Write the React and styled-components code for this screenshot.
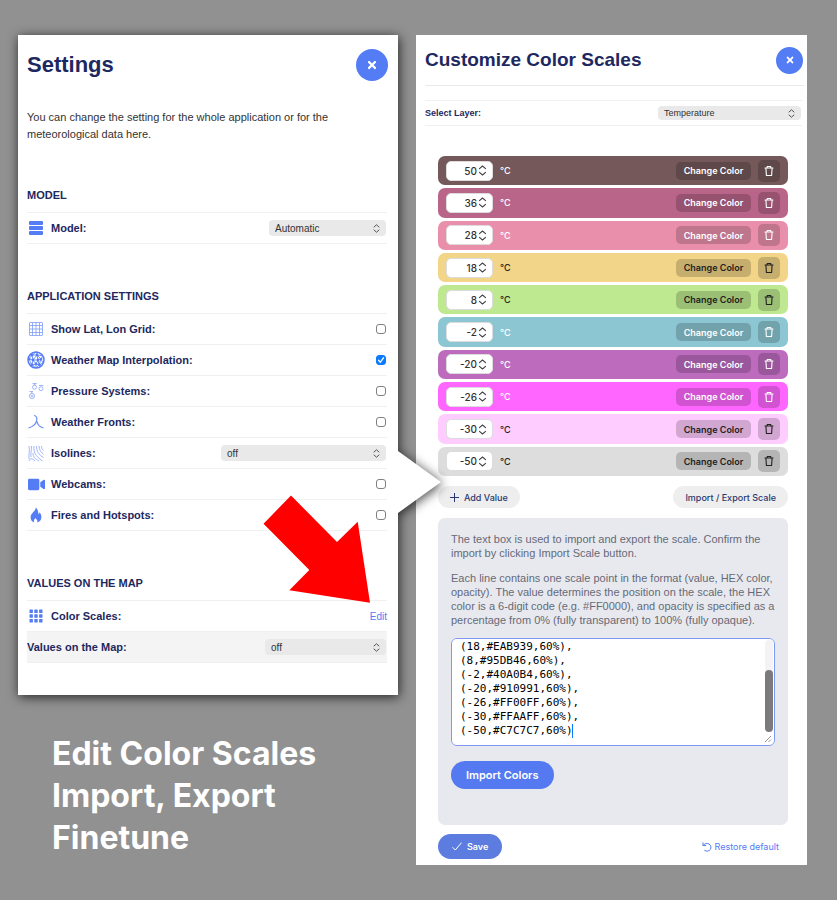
import React, { useEffect, useRef } from "react";
import styled, { createGlobalStyle } from "styled-components";
import { FaTimes, FaVideo } from "react-icons/fa";

const GlobalStyle = createGlobalStyle`
  * {
    box-sizing: border-box;
  }
  body {
    margin: 0;
    background: #919191;
    font-family: "Liberation Sans", Arial, sans-serif;
    color: #333;
  }
  h1, h2, p, ul {
    margin: 0;
    padding: 0;
  }
  button, input, select, textarea {
    font: inherit;
    color: inherit;
    margin: 0;
  }
  button {
    border: 0;
    padding: 0;
    cursor: pointer;
  }
`;

const Page = styled.main`
  display: grid;
  grid-template-columns: 380fr 391fr;
  gap: 18px;
  align-items: start;
  min-height: 100vh;
  padding: 35px 30px 35px 18px;
`;

const SettingsPanel = styled.section`
  position: relative;
  z-index: 1;
  padding: 0 10px 32px 9px;
  background: #fff;
  filter: drop-shadow(1px 2px 6px rgba(0, 0, 0, 0.75));

  &::after {
    content: "";
    position: absolute;
    left: 100%;
    top: 416px;
    width: 43px;
    height: 62px;
    background: #fff;
    clip-path: polygon(0 0, 100% 50%, 0 100%);
  }
`;

const RedArrow = styled.svg`
  position: absolute;
  right: 28px;
  top: 460px;
  width: 107px;
  height: 108px;
  pointer-events: none;
`;

const PanelHeader = styled.header`
  display: flex;
  align-items: center;
  justify-content: space-between;
  height: ${({ $small }) => ($small ? "51px" : "60px")};
  padding-right: ${({ $small }) => ($small ? "1px" : "0")};
  border-bottom: ${({ $small }) => ($small ? "1px solid #e9e9e9" : "0")};

  h1 {
    font-size: ${({ $small }) => ($small ? "19px" : "22px")};
    color: #1d2860;
  }
`;

const CloseButton = styled.button`
  display: grid;
  place-items: center;
  width: ${({ $size }) => $size}px;
  height: ${({ $size }) => $size}px;
  border-radius: 50%;
  background: #537cf5;
  color: #fff;
  font-size: ${({ $size }) => ($size > 30 ? 12 : 10)}px;
`;

const Intro = styled.p`
  margin: 14px 0 0;
  padding-right: 30px;
  font-size: 11px;
  line-height: 17px;
`;

const Group = styled.section`
  margin-top: 35px;

  h2 {
    font-size: 11px;
    line-height: 34px;
    color: #1d2860;
  }
`;

const Rows = styled.ul`
  list-style: none;
  margin-right: 1px;
  border-bottom: 1px solid #f0f0f0;
`;

const Row = styled.li`
  display: flex;
  align-items: center;
  height: 31px;
  border-top: 1px solid #f0f0f0;
  background: ${({ $shaded }) => ($shaded ? "#f4f4f4" : "transparent")};
  font-size: 11px;

  label, .Row-label {
    flex: 1;
    font-weight: bold;
    color: #1d2860;
  }
  a {
    color: #537cf5;
    font-size: 10px;
    text-decoration: none;
  }
`;

const RowIcon = styled.span`
  display: grid;
  place-items: center;
  width: 18px;
  margin-right: 6px;
  color: #537cf5;

  svg {
    display: block;
  }
`;

const SelectBox = styled.span`
  display: grid;
  align-items: center;
  width: ${({ $width }) => $width}px;
  margin-right: 1px;

  select, svg {
    grid-area: 1 / 1;
  }
  svg {
    justify-self: end;
    margin-right: 5px;
    pointer-events: none;
  }
  select {
    appearance: none;
    width: 100%;
    height: ${({ $small }) => ($small ? "14px" : "16px")};
    padding: 0 6px;
    border: 0;
    border-radius: 4px;
    background: #e9e9e9;
    font-size: ${({ $small }) => ($small ? "9px" : "10px")};
    color: #333;
  }
`;

const CheckBox = styled.span`
  display: grid;
  place-items: center;
  margin-right: 1px;

  input, svg {
    grid-area: 1 / 1;
  }
  svg {
    pointer-events: none;
  }
  input {
    appearance: none;
    width: 10px;
    height: 10px;
    border: 1px solid #808080;
    border-radius: 3px;
    background: #fff;
  }
  input:checked {
    border-color: #0a7aff;
    background: #0a7aff;
  }
`;

const Caption = styled.p`
  margin: 38px 0 0 34px;
  font-family: Inter, sans-serif;
  font-size: 32px;
  font-weight: 700;
  line-height: 42px;
  color: #fff;
`;

const ScalesPanel = styled.section`
  padding: 0 3px 6px 9px;
  background: #fff;
  font-family: Inter, sans-serif;

  h1 {
    font-family: "Liberation Sans", Arial, sans-serif;
  }
`;

const LayerRow = styled.div`
  display: flex;
  align-items: center;
  justify-content: space-between;
  height: 26px;
  margin: 14px 2px 0 0;
  border: solid #f0f0f0;
  border-width: 1px 0;
  font-family: "Liberation Sans", Arial, sans-serif;
  font-size: 9px;

  label {
    font-weight: bold;
    color: #1d2860;
  }
`;

const ScalesBody = styled.div`
  padding: 30px 16px 0 13px;
`;

const ScaleList = styled.ul`
  display: grid;
  grid-auto-rows: 1fr;
  gap: 3px;
  min-height: 320px;
  list-style: none;
`;

const ScaleRow = styled.li`
  display: flex;
  align-items: center;
  padding: 0 8px;
  border-radius: 7px;
  background: ${({ $color }) => $color};
  color: ${({ $dark }) => ($dark ? "#222" : "#fff")};
  font-size: 9px;
  font-weight: 500;
`;

const ValueBox = styled.span`
  display: flex;
  align-items: center;
  width: 47px;
  height: 20px;
  padding-right: 4px;
  margin-right: 7px;
  border: 1px solid #dcdcdc;
  border-radius: 5px;
  background: #fff;
  color: #333;

  input {
    appearance: textfield;
    flex: 1;
    min-width: 0;
    padding: 0;
    border: 0;
    background: none;
    font-size: 10px;
    text-align: right;
  }
  input::-webkit-inner-spin-button {
    display: none;
  }
`;

const ShadeButton = styled.button`
  display: grid;
  place-items: center;
  width: ${({ $square }) => ($square ? "22px" : "75px")};
  height: ${({ $square }) => ($square ? "22px" : "18px")};
  margin-left: ${({ $square }) => ($square ? "7px" : "auto")};
  border-radius: 5px;
  background: rgba(0, 0, 0, 0.18);
  font-size: 9px;
  font-weight: 600;
`;

const Actions = styled.div`
  display: flex;
  align-items: center;
  justify-content: space-between;
  margin-top: ${({ $top }) => $top}px;
`;

const PillButton = styled.button`
  display: flex;
  align-items: center;
  gap: 5px;
  height: 22px;
  padding: 0 12px;
  border-radius: 11px;
  background: #eee;
  color: #2b376f;
  font-size: 9px;
  font-weight: 500;
`;

const PrimaryButton = styled(PillButton)`
  height: ${({ $large }) => ($large ? "28px" : "25px")};
  padding: 0 ${({ $large }) => ($large ? "15px" : "14px")};
  border-radius: 14px;
  background: ${({ $large }) => ($large ? "#5479f1" : "#5c7ce0")};
  color: #fff;
  font-size: ${({ $large }) => ($large ? "11px" : "9px")};
  font-weight: 600;
`;

const RestoreButton = styled(PillButton)`
  padding: 0 9px;
  gap: 2px;
  background: none;
  color: #537cf5;
  font-weight: 400;
`;

const ImportCard = styled.div`
  margin-top: 10px;
  padding: 14px 13px 36px;
  border-radius: 7px;
  background: #e8e9ef;

  p {
    margin-bottom: 11px;
    font-family: "Liberation Sans", Arial, sans-serif;
    font-size: 11px;
    line-height: 14px;
    color: #666a78;
  }
`;

const ScaleTextBox = styled.div`
  position: relative;
  margin-bottom: 15px;

  textarea {
    display: block;
    width: 100%;
    height: 108px;
    padding: 7px 8px;
    border: 1px solid #7c9af5;
    border-radius: 6px;
    outline: 0;
    background: #fff;
    color: #000;
    font-family: "DejaVu Sans Mono", monospace;
    font-size: 11px;
    line-height: 14px;
    resize: none;
    scrollbar-width: none;
  }
`;

const Track = styled.span`
  position: absolute;
  top: 2px;
  right: 2px;
  bottom: 14px;
  display: flex;
  align-items: flex-end;
  width: 8px;
  border-radius: 4px;
  background: #f3f3f3;
  pointer-events: none;

  &::after {
    content: "";
    width: 100%;
    height: 67%;
    border-radius: 4px;
    background: #7b7b7b;
  }
`;

const Grip = styled.svg`
  position: absolute;
  right: 3px;
  bottom: 3px;
  pointer-events: none;
`;

const Caret = styled.span`
  position: absolute;
  left: 121px;
  bottom: 8px;
  width: 1px;
  height: 14px;
  background: #0a7aff;
  pointer-events: none;
`;

const Chevrons = ({ size = 9 }) => (
  <svg width={size} height={size} viewBox="0 0 9 9" fill="none" stroke="#444" strokeWidth="0.9" strokeLinecap="round" strokeLinejoin="round">
    <path d="M2 3 4.500 .8 7 3M2 6 4.500 8.200 7 6" />
  </svg>
);

const BarsIcon = () => (
  <svg width="16" height="16" viewBox="0 0 16 16" fill="currentColor">
    <rect x="1" y="1" width="14" height="4" rx="1" />
    <rect x="1" y="6" width="14" height="4" rx="1" />
    <rect x="1" y="11" width="14" height="4" rx="1" />
  </svg>
);

const GridIcon = () => (
  <svg width="16" height="16" viewBox="0 0 16 16" fill="none" stroke="currentColor" strokeWidth="0.8" opacity="0.75">
    <rect x="1.500" y="1.500" width="13" height="13" rx="0.500" />
    <path d="M4.500 1.500v13M8 1.500v13M11.500 1.500v13M1.500 4.500h13M1.500 8h13M1.500 11.500h13" />
  </svg>
);

const InterpolationIcon = () => (
  <svg width="18" height="18" viewBox="0 0 18 18" fill="none" stroke="currentColor" strokeWidth="0.8">
    <circle cx="9" cy="9" r="8" strokeWidth="1.500" />
    <path d="M9 1 5 4l-3 4 4 1-1 5 4 3 3-3 4-2-2-4 2-3-5-1zM5 4l5 0 4 4-3 1-5 0zM10 4 6 9l3 4 2-4zM5 14l4-1 3 1-1-5M2 8l3 6M14 8l-2 6M9 13v4M3 4h2M9 1l4 1 2 3M2 12l3 2" />
    <g fill="currentColor" stroke="none">
      <circle cx="5" cy="4" r="1.400" />
      <circle cx="10" cy="4" r="1.400" />
      <circle cx="6" cy="9" r="1.400" />
      <circle cx="11" cy="9" r="1.400" />
      <circle cx="14" cy="8" r="1.300" />
      <circle cx="9" cy="13" r="1.400" />
      <circle cx="5" cy="14" r="1.400" />
      <circle cx="12.500" cy="14" r="1.400" />
      <circle cx="2.200" cy="8" r="1.200" />
    </g>
  </svg>
);

const PressureIcon = () => (
  <svg width="16" height="18" viewBox="0 0 16 18" fill="none" stroke="currentColor" strokeWidth="0.9" opacity="0.6">
    <circle cx="6.500" cy="5.200" r="2" />
    <circle cx="13" cy="6.700" r="2" />
    <circle cx="4" cy="14" r="2.600" />
    <circle cx="4" cy="14" r="0.900" />
    <path d="M4.500 1.500h4l-3 1.500M11 3.500h4.500M1.500 9.500h3.500l-2 1.500" />
  </svg>
);

const FrontsIcon = () => (
  <svg width="16" height="16" viewBox="0 0 16 16" fill="none" stroke="currentColor" strokeWidth="1.200" opacity="0.85">
    <path d="M6 1.500c3 .5 3 2 2.800 4C8.500 9 6 12.500.5 14M8.800 7c.7 3.500 3 6 6.700 7" />
  </svg>
);

const IsolinesIcon = () => (
  <svg width="16" height="17" viewBox="0 0 16 17" fill="none" stroke="currentColor" strokeWidth="0.9" opacity="0.6">
    <path d="M1 1c1 5-.5 8 0 13M3.500 1c0 5-1 8-.5 11M6 1c-.5 6 1 10 8.500 15M8.500 1c0 5 2 9 7 11.500M11 1c.5 4 1.500 6 4.500 8M13.500 1c.2 2.500.8 3.500 2 4.500M5 8c0 4 2 6 6 8M1 16c1-3 3-3 6 0" />
  </svg>
);

const FlameIcon = () => (
  <svg width="12" height="16" viewBox="0 0 12 16" fill="currentColor">
    <path d="M5.800.5C5.800 4 1 6 .6 10c-.2 3 1.700 5 3.700 5.500-.9-1.900-.2-3.300 1.200-4.500.3 1 .9 1.400 1.500 1.700.6.900.5 1.900.1 2.800C9.500 15 11.500 13 11.400 10c0-2-.9-3.500-1.900-4.700 0 1-.3 1.800-1 2.300C8.500 4.500 7.500 2 5.800.5z" />
  </svg>
);

const TilesIcon = () => (
  <svg width="14" height="14" viewBox="0 0 14 14" fill="currentColor">
    {[0.5, 5.3, 10.1].map((y) =>
      [0.5, 5.3, 10.1].map((x) => <rect key={`${x}-${y}`} x={x} y={y} width="3.400" height="3.400" rx="0.500" />)
    )}
  </svg>
);

const TrashIcon = () => (
  <svg width="10" height="12" viewBox="0 0 10 12" fill="none" stroke="currentColor" strokeWidth="1.100" strokeLinecap="round" strokeLinejoin="round">
    <path d="M1 3h8M3.200 3V1.500h3.600V3M1.900 3l.5 7.500h5.200L8.100 3" />
  </svg>
);

const appSettings = [
  { id: "grid", label: "Show Lat, Lon Grid:", icon: <GridIcon /> },
  { id: "interpolation", label: "Weather Map Interpolation:", icon: <InterpolationIcon />, checked: true },
  { id: "pressure", label: "Pressure Systems:", icon: <PressureIcon /> },
  { id: "fronts", label: "Weather Fronts:", icon: <FrontsIcon /> },
  { id: "isolines", label: "Isolines:", icon: <IsolinesIcon />, select: true },
  { id: "webcams", label: "Webcams:", icon: <FaVideo size={17} /> },
  { id: "fires", label: "Fires and Hotspots:", icon: <FlameIcon /> },
];

const scale = [
  { value: 50, color: "#755859" },
  { value: 36, color: "#b96589" },
  { value: 28, color: "#e98fab" },
  { value: 18, color: "#f2d588", dark: true },
  { value: 8, color: "#bfe990", dark: true },
  { value: -2, color: "#8cc6d2" },
  { value: -20, color: "#bd6bbd" },
  { value: -26, color: "#ff66ff" },
  { value: -30, color: "#ffccff", dark: true },
  { value: -50, color: "#dddddd", dark: true },
];

const scaleText = `(50,#2B0001,70%),
(36,#8A0039,60%),
(28,#DA4573,60%),
(18,#EAB939,60%),
(8,#95DB46,60%),
(-2,#40A0B4,60%),
(-20,#910991,60%),
(-26,#FF00FF,60%),
(-30,#FFAAFF,60%),
(-50,#C7C7C7,60%)`;

const Dropdown = ({ id, width, option, small }) => (
  <SelectBox $width={width} $small={small}>
    <select id={id}>
      <option>{option}</option>
    </select>
    <Chevrons />
  </SelectBox>
);

const Settings = () => (
  <SettingsPanel>
    <PanelHeader>
      <h1>Settings</h1>
      <CloseButton $size={32} aria-label="Close settings">
        <FaTimes />
      </CloseButton>
    </PanelHeader>
    <Intro>You can change the setting for the whole application or for the meteorological data here.</Intro>

    <Group>
      <h2>MODEL</h2>
      <Rows>
        <Row>
          <RowIcon><BarsIcon /></RowIcon>
          <label htmlFor="model">Model:</label>
          <Dropdown id="model" width={117} option="Automatic" />
        </Row>
      </Rows>
    </Group>

    <Group>
      <h2>APPLICATION SETTINGS</h2>
      <Rows>
        {appSettings.map(({ id, label, icon, checked, select }) => (
          <Row key={id}>
            <RowIcon>{icon}</RowIcon>
            <label htmlFor={id}>{label}</label>
            {select ? (
              <Dropdown id={id} width={165} option="off" />
            ) : (
              <CheckBox>
                <input id={id} type="checkbox" defaultChecked={checked} />
                {checked && (
                  <svg width="8" height="8" viewBox="0 0 8 8" fill="none" stroke="#fff" strokeWidth="1.300" strokeLinecap="round">
                    <path d="M1.500 4.300 3.300 6.200 6.500 1.800" />
                  </svg>
                )}
              </CheckBox>
            )}
          </Row>
        ))}
      </Rows>
    </Group>

    <Group>
      <h2>VALUES ON THE MAP</h2>
      <Rows>
        <Row>
          <RowIcon><TilesIcon /></RowIcon>
          <span className="Row-label">Color Scales:</span>
          <a href="#color-scales">Edit</a>
        </Row>
        <Row $shaded>
          <label htmlFor="map-values">Values on the Map:</label>
          <Dropdown id="map-values" width={121} option="off" />
        </Row>
      </Rows>
    </Group>

    <RedArrow viewBox="263 495 107 108" aria-hidden="true">
      <path d="M291 495.500 337 542 357.700 521.700 370 602.700 289.300 590.300 309.300 570 263.500 523.700z" fill="#f00" />
    </RedArrow>
  </SettingsPanel>
);

const ColorScales = () => {
  const textRef = useRef(null);

  useEffect(() => {
    textRef.current.scrollTop = textRef.current.scrollHeight;
  }, []);

  return (
    <ScalesPanel id="color-scales">
      <PanelHeader $small>
        <h1>Customize Color Scales</h1>
        <CloseButton $size={27} aria-label="Close color scales">
          <FaTimes />
        </CloseButton>
      </PanelHeader>
      <LayerRow>
        <label htmlFor="layer">Select Layer:</label>
        <Dropdown id="layer" width={143} option="Temperature" small />
      </LayerRow>

      <ScalesBody>
        <ScaleList>
          {scale.map(({ value, color, dark }) => (
            <ScaleRow key={value} $color={color} $dark={dark}>
              <ValueBox>
                <input type="number" defaultValue={value} aria-label={`Value ${value}`} />
                <Chevrons size={11} />
              </ValueBox>
              °C
              <ShadeButton>Change Color</ShadeButton>
              <ShadeButton $square aria-label="Delete value">
                <TrashIcon />
              </ShadeButton>
            </ScaleRow>
          ))}
        </ScaleList>

        <Actions $top={10}>
          <PillButton>
            <svg width="9" height="9" viewBox="0 0 9 9" stroke="currentColor" strokeWidth="1">
              <path d="M4.500 0v9M0 4.500h9" />
            </svg>
            Add Value
          </PillButton>
          <PillButton>Import / Export Scale</PillButton>
        </Actions>

        <ImportCard>
          <p>The text box is used to import and export the scale. Confirm the import by clicking Import Scale button.</p>
          <p>
            Each line contains one scale point in the format (value, HEX color, opacity). The value determines the
            position on the scale, the HEX color is a 6-digit code (e.g. #FF0000), and opacity is specified as a
            percentage from 0% (fully transparent) to 100% (fully opaque).
          </p>
          <ScaleTextBox>
            <textarea ref={textRef} defaultValue={scaleText} spellCheck={false} aria-label="Color scale" />
            <Caret />
            <Track />
            <Grip width="8" height="8" viewBox="0 0 8 8" stroke="#888" strokeWidth="0.900">
              <path d="M1 7 7 1M4.500 7 7 4.500" />
            </Grip>
          </ScaleTextBox>
          <PrimaryButton $large>Import Colors</PrimaryButton>
        </ImportCard>

        <Actions $top={9}>
          <PrimaryButton>
            <svg width="10" height="9" viewBox="0 0 10 9" fill="none" stroke="currentColor" strokeWidth="1" strokeLinecap="round">
              <path d="M.8 5.500 3.300 8 9.200 1" />
            </svg>
            Save
          </PrimaryButton>
          <RestoreButton>
            <svg width="10" height="10" viewBox="0 0 10 10" fill="none" stroke="currentColor" strokeWidth="1" strokeLinecap="round" strokeLinejoin="round">
              <path d="M1 .8v2.700h2.800M1.200 3.300C2.500 1.400 5 .9 7 2c2 1.200 2.500 3.700 1.300 5.500C7 9.300 4.500 9.700 2.700 8.500" />
            </svg>
            Restore default
          </RestoreButton>
        </Actions>
      </ScalesBody>
    </ScalesPanel>
  );
};

const App = () => {
  return (
    <>
      <GlobalStyle />
      <Page>
        <div>
          <Settings />
          <Caption>
            Edit Color Scales
            <br />
            Import, Export
            <br />
            Finetune
          </Caption>
        </div>
        <ColorScales />
      </Page>
    </>
  );
};

export default App;
